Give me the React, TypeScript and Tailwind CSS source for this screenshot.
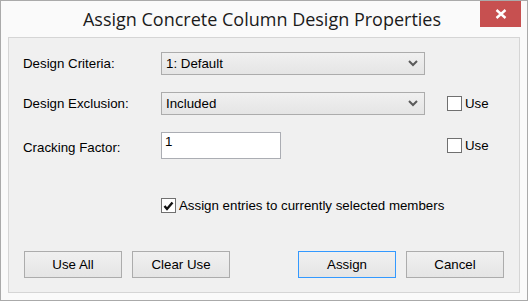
const LABEL = "w-[138px] shrink-0 text-[13.3px] text-black";

function Chevron() {
  return (
    <svg width="10" height="7" viewBox="0 0 10 7" className="shrink-0">
      <polyline points="1,1 5,5 9,1" fill="none" stroke="#5a5a5a" strokeWidth="2" />
    </svg>
  );
}

function Select({ value }: { value: string }) {
  return (
    <div className="flex h-[23px] w-[264px] shrink-0 items-center justify-between border border-[#acacac] bg-gradient-to-b from-[#f0f0f0] to-[#e5e5e5] pl-[4px] pr-[6px] text-[13.3px] text-black">
      <span>{value}</span>
      <Chevron />
    </div>
  );
}

function Check({ checked = false, label }: { checked?: boolean; label: string }) {
  return (
    <div className="flex items-center gap-[3px] text-[13.3px] text-black">
      <span className="flex h-[15px] w-[15px] items-center justify-center border border-[#707070] bg-white">
        {checked && (
          <svg width="11" height="10" viewBox="0 0 11 10">
            <polyline points="1.5,5 4,8 9.5,1.5" fill="none" stroke="#111" strokeWidth="2.4" />
          </svg>
        )}
      </span>
      <span>{label}</span>
    </div>
  );
}

function Button({ label, primary = false }: { label: string; primary?: boolean }) {
  return (
    <div
      className={`flex h-[27px] w-[98px] items-center justify-center border bg-gradient-to-b from-[#f0f0f0] to-[#e5e5e5] text-[13.3px] text-black ${
        primary ? "border-[#3399ff]" : "border-[#acacac]"
      }`}
    >
      {label}
    </div>
  );
}

export default function App() {
  return (
    <div
      className="flex h-[301px] w-[528px] flex-col border border-[#aaaaaa] bg-[#fafafa]"
      style={{ fontFamily: '"Liberation Sans", Arial, sans-serif' }}
    >
      <div className="relative flex h-[36px] shrink-0 items-center justify-center">
        <span
          className="pr-[4px] pt-[1px] text-[18px] text-[#1b1b1b]"
          style={{ fontFamily: '"Open Sans", "Noto Sans", sans-serif' }}
        >
          Assign Concrete Column Design Properties
        </span>
        <div className="absolute right-[6px] top-0 flex h-[26px] w-[41px] items-center justify-center bg-[#c75050]">
          <svg width="12" height="10" viewBox="0 0 12 10">
            <path d="M1.5 1 L10.5 9 M10.5 1 L1.5 9" stroke="#fff" strokeWidth="2.4" />
          </svg>
        </div>
      </div>

      <div className="mx-[7px] flex h-[256px] flex-col border border-[#d5d5d5] bg-[#f0f0f0] pt-[14px]">
        <div className="flex h-[23px] items-center pl-[14px]">
          <span className={LABEL}>Design Criteria:</span>
          <Select value="1: Default" />
        </div>

        <div className="mt-[17px] flex h-[23px] items-center pl-[14px]">
          <span className={LABEL}>Design Exclusion:</span>
          <Select value="Included" />
          <div className="ml-[22px]">
            <Check label="Use" />
          </div>
        </div>

        <div className="mt-[17px] flex h-[27px] items-center pl-[14px]">
          <span className={`${LABEL} mt-[5px]`}>Cracking Factor:</span>
          <div className="h-[27px] w-[120px] shrink-0 border border-[#abadb3] bg-white pl-[3px] pt-[1px] text-[13.3px] leading-[16px] text-black">
            1
          </div>
          <div className="ml-[166px]">
            <Check label="Use" />
          </div>
        </div>

        <div className="mt-[39px] flex h-[15px] items-center pl-[152px]">
          <Check checked label="Assign entries to currently selected members" />
        </div>

        <div className="mt-[38px] flex justify-between px-[15px]">
          <div className="flex gap-[10px]">
            <Button label="Use All" />
            <Button label="Clear Use" />
          </div>
          <div className="flex gap-[10px]">
            <Button label="Assign" primary />
            <Button label="Cancel" />
          </div>
        </div>
      </div>
    </div>
  );
}
